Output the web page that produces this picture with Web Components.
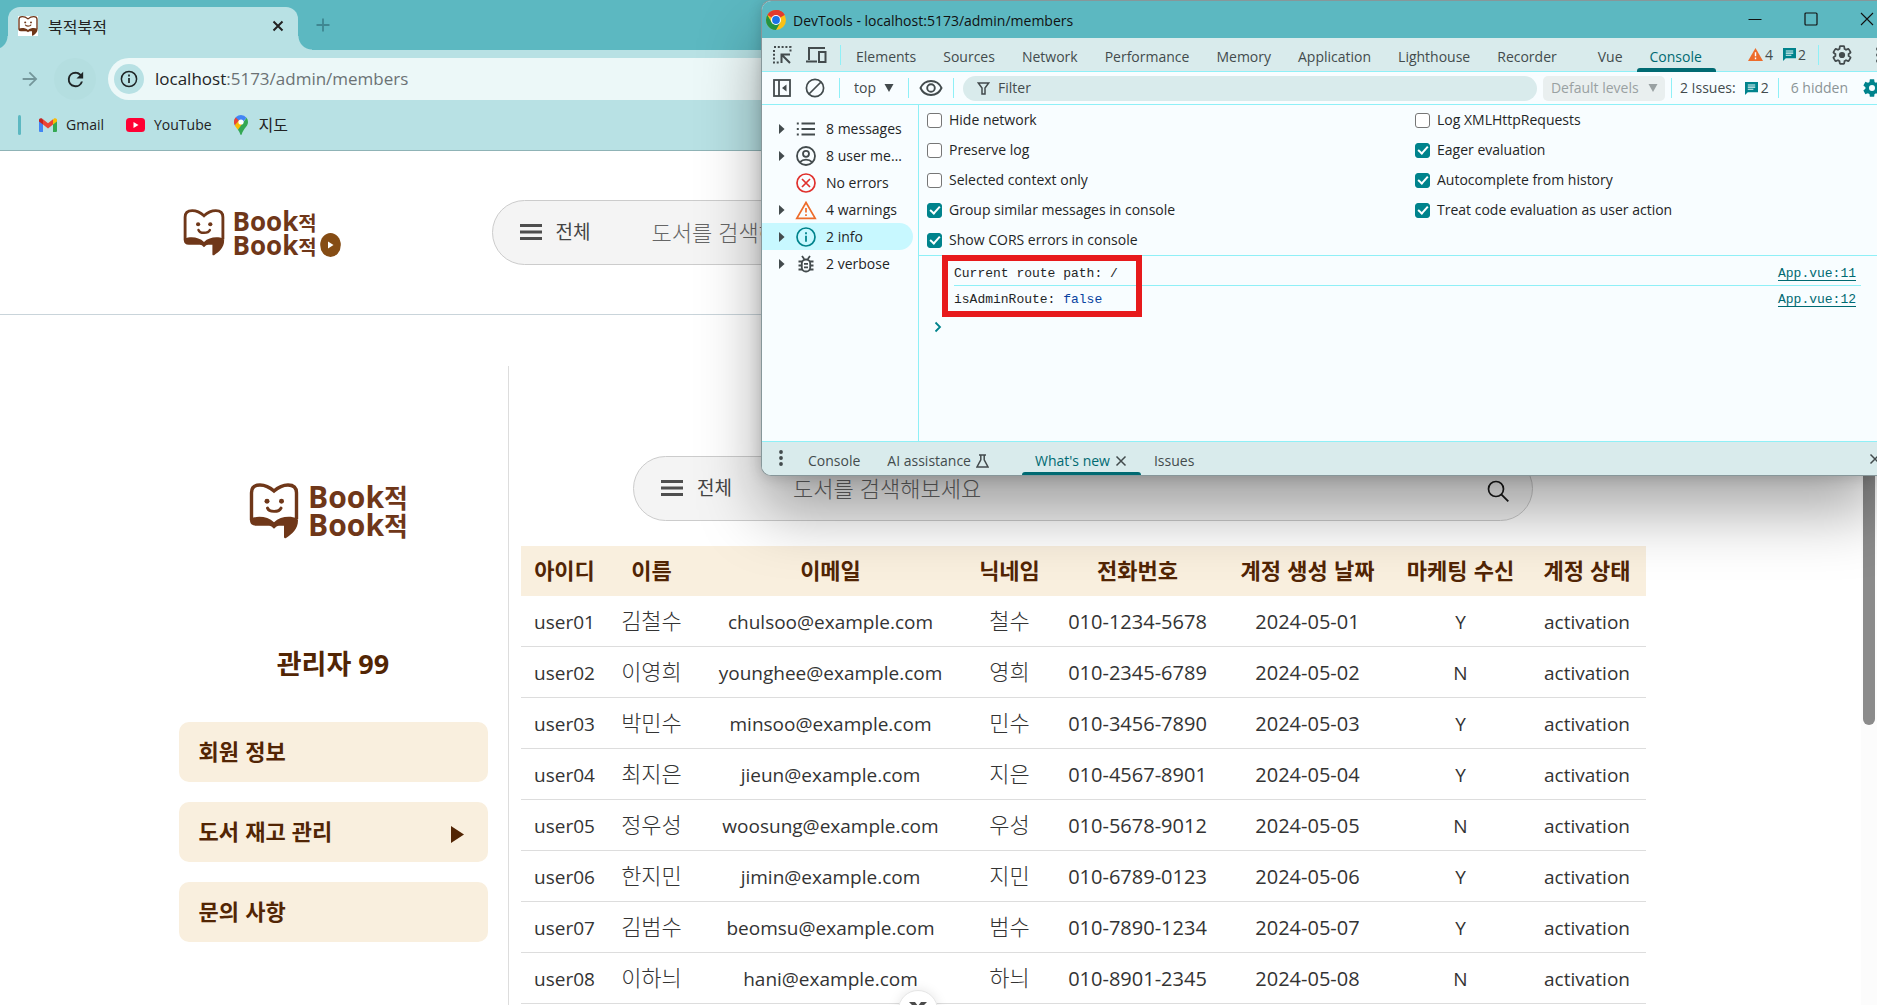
<!DOCTYPE html>
<html lang="ko">
<head>
<meta charset="utf-8">
<title>북적북적</title>
<style>
  html, body { height: 100%; }
  body {
    margin: 0; overflow: hidden; background: #fff; color: #333;
    font-family: "Open Sans", "Noto Sans CJK KR", sans-serif;
    --brand: #6f3719; --brand-dark: #522504; --cream: #f9efde;
    --teal: #5cb8c1; --teal-soft: #b8e1e4; --panel: #d9ebec; --line: #8ff0f7; --accent: #00838c; --accent-dark: #006a72;
  }
</style>
</head>
<body>
<app-desktop></app-desktop>

<script>
const define = (name, html, setup) => {
  const template = document.createElement('template');
  template.innerHTML = html;
  customElements.define(name, class extends HTMLElement {
    constructor() {
      super();
      this.attachShadow({ mode: 'open' }).append(template.content.cloneNode(true));
    }
    connectedCallback() { if (setup) setup(this, this.shadowRoot); }
  });
};

const GEAR = 'M19.14 12.94c.04-.3.06-.61.06-.94 0-.32-.02-.64-.07-.94l2.03-1.58c.18-.14.23-.41.12-.61l-1.92-3.32c-.12-.22-.37-.29-.59-.22l-2.39.96c-.5-.38-1.03-.7-1.62-.94l-.36-2.54c-.04-.24-.24-.41-.48-.41h-3.84c-.24 0-.43.17-.47.41l-.36 2.54c-.59.24-1.13.57-1.62.94l-2.39-.96c-.22-.08-.47 0-.59.22L2.74 8.87c-.12.21-.08.47.12.61l2.03 1.58c-.05.3-.09.63-.09.94s.02.64.07.94l-2.03 1.58c-.18.14-.23.41-.12.61l1.92 3.32c.12.22.37.29.59.22l2.39-.96c.5.38 1.03.7 1.62.94l.36 2.54c.05.24.24.41.48.41h3.84c.24 0 .44-.17.47-.41l.36-2.54c.59-.24 1.13-.56 1.62-.94l2.39.96c.22.08.47 0 .59-.22l1.92-3.32c.12-.22.07-.47-.12-.61z';
const BOOK = `<path d="M2.5 38V10C2.5 4 6 2 11 2c6 0 10 2.500 14 6.200C29 4.500 33 2 39 2c5 0 8.500 2 8.500 8v27" fill="#fff" stroke="#6f3719" stroke-width="3.400"/>
  <path d="M2 36c7-3 17-2 23 4 6-6 16-7 23-4l1 2c0 9-6 14-12 18-1.500.600-2 0-2-1.500V43.500h-5c-2 0-3 1-5 3-2-2-3-3-5-3H7c-4 0-6-2-6-5.500z" fill="#6f3719"/>
  <circle cx="18" cy="18.500" r="2.500" fill="#6f3719"/><circle cx="32.500" cy="18.500" r="2.500" fill="#6f3719"/>
  <path d="M18.500 25.500c1.500 4.500 11.500 4.500 13.500 0" fill="none" stroke="#6f3719" stroke-width="3" stroke-linecap="round"/>`;

/* name: [width, height, viewBox, markup] */
const ICONS = {
  book: [50, 56, '0 0 50 57', BOOK],
  favicon: [20, 20, '0 0 50 57', `<rect width="50" height="57" fill="#fff"/>${BOOK}`],
  close: [20, 20, '0 0 20 20', '<path d="M5.500 5.500l9 9m0-9l-9 9" stroke="#222" stroke-width="2" fill="none"/>'],
  plus: [20, 20, '0 0 20 20', '<path d="M10 3.500v13M3.500 10h13" stroke="#3f8791" stroke-width="1.800"/>'],
  forward: [22, 22, '0 0 24 24', '<path d="M12 4l-1.400 1.400 5.600 5.600H4v2h12.200l-5.600 5.600L12 20l8-8z" fill="#74969a"/>'],
  reload: [23, 23, '0 0 24 24', '<path d="M17.650 6.350A7.960 7.960 0 0 0 12 4a8 8 0 1 0 7.730 10h-2.080A6 6 0 1 1 12 6c1.660 0 3.140.690 4.220 1.780L13 11h7V4z" fill="#1f2526"/>'],
  info: [30, 30, '0 0 30 30', '<circle cx="15" cy="15" r="15" fill="#b8e1e4"/><circle cx="15" cy="15" r="7.600" fill="none" stroke="#1f2526" stroke-width="1.500"/><path d="M15 14v5M15 10.500v2" stroke="#1f2526" stroke-width="1.700"/>'],
  gmail: [18, 14, '0 0 18 14', '<path d="M0 1.500V13a1 1 0 0 0 1 1h3V6z" fill="#4285f4"/><path d="M18 1.500V13a1 1 0 0 1-1 1h-3V6z" fill="#34a853"/><path d="M14 1.500L15 .600C16.200-.400 18 .300 18 2v1.500L14 6.500z" fill="#fbbc04"/><path d="M4 6.500L0 3.500V2C0 .300 1.800-.400 3 .600L4 1.500z" fill="#c5221f"/><path d="M4 1.300l5 3.900 5-3.900v5.200l-5 3.900-5-3.900z" fill="#ea4335"/>'],
  youtube: [19, 14, '0 0 19 14', '<rect width="19" height="14" rx="3.500" fill="#ff0033"/><path d="M7.500 4v6l5-3z" fill="#fff"/>'],
  maps: [14, 20, '0 0 14 20', '<path d="M7 0a7 7 0 0 1 5.500 2.700L4.600 12 1.300 11A7 7 0 0 1 0 7a7 7 0 0 1 7-7z" fill="#4285f4"/><path d="M1.600 2.600L5 5.500 1 10.500A7 7 0 0 1 1.600 2.600z" fill="#ea4335"/><path d="M8.900 8.800l-5 6C2.800 13.200 1.500 11.800.800 10.200L5.300 5z" fill="#fbbc04"/><path d="M12.600 2.800c2 2.800 1.800 6-.300 8.700C10 14.500 8.500 16.500 7.800 19c-.200 1.200-1.400 1.200-1.600 0-.500-1.700-1.300-3-2.300-4.200z" fill="#34a853"/><circle cx="7" cy="7" r="2.600" fill="#fff"/>'],
  menu: [22, 16, '0 0 22 16', '<path d="M0 1.500h22M0 8h22M0 14.500h22" stroke="#4e4e4e" stroke-width="2.800"/>'],
  play: [21, 24, '0 0 21 24', '<ellipse cx="10.500" cy="12" rx="10.300" ry="12" fill="#854c14"/><path d="M8 8.500v7l5.500-3.500z" fill="#fff"/>'],
  search: [24, 24, '0 0 24 24', '<circle cx="10" cy="10" r="7.500" fill="none" stroke="#1a1a1a" stroke-width="1.700"/><path d="M15.300 15.300l7 7" stroke="#1a1a1a" stroke-width="1.900"/>'],
  triangle: [13, 17, '0 0 13 17', '<path d="M0 0v17l13-8.500z" fill="#522504"/>'],
  chrome: [20, 20, '0 0 20 20', '<circle cx="10" cy="10" r="10" fill="#fbc116"/><path d="M10 10L1.340 5A10 10 0 0 1 18.660 5z" fill="#e33b2e"/><path d="M10 0a10 10 0 0 1 8.660 5H10z" fill="#e33b2e"/><path d="M1.340 5A10 10 0 0 0 10 20l4.330-7.500L10 10 5.670 12.500z" fill="#229342"/><circle cx="10" cy="10" r="5" fill="#fff"/><circle cx="10" cy="10" r="3.900" fill="#1a73e8"/>'],
  winmin: [14, 14, '0 0 14 14', '<path d="M.500 7.500h13" stroke="#111"/>'],
  winmax: [14, 14, '0 0 14 14', '<rect x="1" y="1" width="12" height="12" rx="1" fill="none" stroke="#111" stroke-width="1.200"/>'],
  winclose: [14, 14, '0 0 14 14', '<path d="M1 1l12 12M13 1L1 13" stroke="#111" stroke-width="1.100"/>'],
  inspect: [20, 20, '0 0 20 20', '<path d="M2 2h16.500v5" fill="none" stroke="#434b4d" stroke-width="2" stroke-dasharray="2 1.800"/><path d="M2 5v12.500h6" fill="none" stroke="#434b4d" stroke-width="2" stroke-dasharray="2 1.800"/><path d="M9.500 18V9.500H18M10 10l8 8" fill="none" stroke="#434b4d" stroke-width="2"/>'],
  device: [22, 18, '0 0 22 18', '<path d="M4 14V2h16M1 15.500h11" fill="none" stroke="#434b4d" stroke-width="2"/><rect x="14" y="6" width="6.500" height="10" fill="none" stroke="#434b4d" stroke-width="2"/>'],
  panel: [18, 18, '0 0 18 18', '<rect x="1" y="1" width="16" height="16" fill="none" stroke="#434b4d" stroke-width="1.800"/><path d="M6 1v16" stroke="#434b4d" stroke-width="1.800"/><path d="M13.500 5.500v7L9 9z" fill="#434b4d"/>'],
  ban: [20, 20, '0 0 20 20', '<circle cx="10" cy="10" r="8.600" fill="none" stroke="#434b4d" stroke-width="1.700"/><path d="M4 16L16 4" stroke="#434b4d" stroke-width="1.700"/>'],
  caret: [10, 8, '0 0 10 8', '<path d="M.500 0h9L5 8z" fill="currentColor"/>'],
  eye: [24, 18, '0 0 24 18', '<path d="M1.500 9C3.500 4.500 7.300 2 12 2s8.500 2.500 10.500 7c-2 4.500-5.800 7-10.500 7S3.500 13.500 1.500 9z" fill="none" stroke="#434b4d" stroke-width="1.900"/><circle cx="12" cy="9" r="3.800" fill="none" stroke="#434b4d" stroke-width="1.900"/>'],
  funnel: [13, 13, '0 0 13 13', '<path d="M1.300 1h10.400L8 6v6H5V6z" fill="none" stroke="#434b4d" stroke-width="1.500"/>'],
  warn: [15, 13, '0 0 16 14', '<path d="M8 0l8 14H0z" fill="#ed6c2b"/><path d="M8 4.500v4.500M8 10.300v1.700" stroke="#fff" stroke-width="1.500"/>'],
  chat: [13, 13, '0 0 14 14', '<path d="M0 0h14v11H3l-3 3z" fill="#00838c"/><path d="M3 3.200h8M3 5.500h8M3 7.800h6" stroke="#e4f5f5" stroke-width="1.200"/>'],
  gear: [22, 22, '0 0 24 24', `<path d="${GEAR}" fill="none" stroke="#434b4d" stroke-width="1.900"/><circle cx="12" cy="12" r="3.400" fill="#434b4d"/>`],
  gearfill: [22, 22, '0 0 24 24', `<path d="${GEAR}" fill="#00838c"/><circle cx="12" cy="12" r="3.300" fill="#f8fdff"/>`],
  dots: [4, 16, '0 0 4 16', '<path d="M2 2v.010M2 8v.010M2 14v.010" stroke="#434b4d" stroke-width="3.800" stroke-linecap="round"/>'],
  right: [6, 10, '0 0 7 10', '<path d="M0 0l6.500 5L0 10z" fill="#434b4d"/>'],
  list: [20, 20, '0 0 20 20', '<path d="M5.500 4.500H19M5.500 10H19M5.500 15.500H19M.800 4.500h2M.800 10h2M.800 15.500h2" stroke="#434b4d" stroke-width="1.800"/>'],
  user: [20, 20, '0 0 20 20', '<g fill="none" stroke="#434b4d" stroke-width="1.800"><circle cx="10" cy="10" r="9"/><circle cx="10" cy="7.800" r="3"/><path d="M4 16.200c3-3.400 9-3.400 12 0"/></g>'],
  error: [20, 20, '0 0 20 20', '<g fill="none" stroke="#e0312d" stroke-width="1.700"><circle cx="10" cy="10" r="9"/><path d="M6 6l8 8M14 6l-8 8"/></g>'],
  warning: [22, 20, '0 0 22 20', '<path d="M11 2.500l9.200 15.800H1.800z" fill="none" stroke="#ed6c2b" stroke-width="1.700"/><path d="M11 8v4.500M11 14.200v1.900" stroke="#ed6c2b" stroke-width="1.700"/>'],
  infoline: [20, 20, '0 0 20 20', '<circle cx="10" cy="10" r="9" fill="none" stroke="#00838c" stroke-width="1.700"/><path d="M10 8.800v6M10 5.300v2" stroke="#00838c" stroke-width="1.800"/>'],
  bug: [20, 20, '0 0 20 20', '<g fill="none" stroke="#434b4d" stroke-width="1.800"><rect x="5.800" y="5.500" width="8.400" height="12" rx="4"/><path d="M6 2l2.200 3M14 2l-2.200 3M2.500 7.500h3.500M2.500 11.500h3.500M2.500 15.500h3.500M14 7.500h3.500M14 11.500h3.500M14 15.500h3.500M8 9.800h4M8 13.300h4"/></g>'],
  prompt: [8, 12, '0 0 8 12', '<path d="M1.500 1.500L6 6l-4.500 4.500" fill="none" stroke="#00838c" stroke-width="1.800"/>'],
  flask: [13, 14, '0 0 13 14', '<path d="M3 .900h7M4.800 1v4.800L1 12.900h11L8.200 5.800V1" fill="none" stroke="#434b4d" stroke-width="1.500"/>'],
  x: [12, 12, '0 0 12 12', '<path d="M1.500 1.500l9 9m0-9l-9 9" stroke="#434b4d" stroke-width="1.500"/>'],
  wings: [18, 14, '0 0 18 14', '<path d="M0 0h6l3 4 3-4h6l-3 3 1 4-4-2-3 4-3-4-4 2 1-4z" fill="#4b4b4b"/>']
};

customElements.define('ui-icon', class extends HTMLElement {
  connectedCallback() {
    const [w, h, box, body] = ICONS[this.getAttribute('name')];
    const width = this.getAttribute('width') || w;
    const height = Math.round(h * width / w);
    if (!this.shadowRoot) this.attachShadow({ mode: 'open' });
    this.shadowRoot.innerHTML = `<style>:host{display:inline-flex;flex:none}svg{display:block}</style>
      <svg width="${width}" height="${height}" viewBox="${box}" preserveAspectRatio="none" aria-hidden="true">${body}</svg>`;
  }
});

/* ---------- browser chrome ---------- */
define('browser-tabs', `
<style>
  :host { display: flex; height: 50px; padding-left: 8px; align-items: flex-end; gap: 9px; background: var(--teal); }
  .tab { display: flex; align-items: center; box-sizing: border-box; width: 290px; height: 43px; padding: 0 10px 6px 10px;
    background: var(--teal-soft); border-radius: 12px 12px 0 0; position: relative; font-size: 16px; line-height: 24px; color: #222; }
  .tab::before, .tab::after { content: ""; position: absolute; bottom: 0; width: 14px; height: 14px; }
  .tab::before { left: -14px; background: radial-gradient(circle at 0 0, transparent 13px, var(--teal-soft) 14px); }
  .tab::after { right: -14px; background: radial-gradient(circle at 100% 0, transparent 13px, var(--teal-soft) 14px); }
  .title { flex: 1; margin-left: 10px; padding-top: 2px; }
  button { border: 0; background: none; padding: 0; display: flex; }
  .new { height: 50px; align-items: center; margin-left: 6px; }
</style>
<div class="tab"><ui-icon name="favicon"></ui-icon><span class="title">북적북적</span>
  <button aria-label="close tab"><ui-icon name="close"></ui-icon></button></div>
<button class="new" aria-label="new tab"><ui-icon name="plus"></ui-icon></button>`);

define('browser-toolbar', `
<style>
  :host { display: flex; align-items: center; height: 58px; padding-left: 19px; background: var(--teal-soft); }
  button { border: 0; padding: 0; display: flex; align-items: center; justify-content: center; background: none; }
  .reload { width: 42px; height: 42px; border-radius: 50%; background: #b4dee0; margin: 0 12px 0 13px; }
  .address { flex: 1; display: flex; align-items: center; gap: 11px; height: 42px; padding-left: 6px; border-radius: 21px 0 0 21px; background: #ecf8f8;
    font-size: 17px; line-height: 24px; color: #6b7274; }
  b { font-weight: 400; color: #1f2526; }
</style>
<button aria-label="forward"><ui-icon name="forward"></ui-icon></button>
<button class="reload" aria-label="reload"><ui-icon name="reload"></ui-icon></button>
<div class="address"><ui-icon name="info"></ui-icon><span><b>localhost</b>:5173/admin/members</span></div>`);

define('bookmarks-bar', `
<style>
  :host { display: flex; align-items: center; box-sizing: border-box; height: 43px; padding: 0 0 8px 18px; background: var(--teal-soft); border-bottom: 1px solid #8fb3b6; }
  .split { width: 3px; height: 20px; border-radius: 2px; background: var(--teal); margin-right: 18px; }
  a { display: flex; align-items: center; gap: 9px; margin-right: 22px; color: #222; text-decoration: none; font-size: 14px; line-height: 22px; }
  a.map { gap: 11px; font-size: 16px; }
</style>
<span class="split"></span>
<a href="#"><ui-icon name="gmail"></ui-icon>Gmail</a>
<a href="#"><ui-icon name="youtube"></ui-icon>YouTube</a>
<a href="#" class="map"><ui-icon name="maps"></ui-icon>지도</a>`);

/* ---------- site ---------- */
define('brand-logo', `
<style>
  :host { display: inline-flex; align-items: center; gap: 9px; color: var(--brand); --size: 30px; --pitch: 28px; }
  :host([small]) { gap: 8px; --size: 26px; --pitch: 24px; }
  .name { font: 700 var(--size)/var(--pitch) "Open Sans", "Noto Sans CJK KR", sans-serif; white-space: nowrap; }
  .name div { height: var(--pitch); }
  small { font-size: 26px; }
  :host([small]) small { font-size: 20px; }
</style>
<ui-icon name="book"></ui-icon>
<div class="name"><div>Book<small>적</small></div><div>Book<small>적</small></div></div>
<slot></slot>`, (host, root) => {
  if (host.hasAttribute('small')) {
    const icon = root.querySelector('ui-icon');
    icon.setAttribute('width', 42);
    icon.connectedCallback();
  }
});

define('search-bar', `
<style>
  :host { display: block; width: 900px; }
  form { display: flex; align-items: center; box-sizing: border-box; height: 65px; padding: 0 22px 2px 27px; margin: 0; border: 1px solid #ccc; border-radius: 33px; background: #f4f4f4; }
  button { border: 0; background: none; padding: 0; display: flex; align-items: center; gap: 14px; font: 400 19px/28px "Noto Sans CJK KR", sans-serif; color: #444; }
  button span { padding-bottom: 2px; }
  input { flex: 1; min-width: 0; margin: 0 0 0 61px; padding: 0 0 2px; border: 0; outline: 0; background: none; font: 300 22px/32px "Noto Sans CJK KR", sans-serif; color: #333; }
  input::placeholder { color: #666; opacity: 1; }
  .go { padding-top: 6px; }
</style>
<form>
  <button type="button"><ui-icon name="menu"></ui-icon><span>전체</span></button>
  <input type="text" placeholder="도서를 검색해보세요" aria-label="도서 검색">
  <button type="button" class="go" aria-label="search"><ui-icon name="search"></ui-icon></button>
</form>`);

define('site-header', `
<style>
  :host { display: block; border-bottom: 1px solid #c9d4da; }
  .inner { display: flex; align-items: center; box-sizing: border-box; max-width: 1504px; height: 163px; margin: 0 auto; padding: 0 4px; gap: 151px; }
  brand-logo { width: 158px; }
  .badge { align-self: flex-end; margin-left: -5px; }
</style>
<div class="inner">
  <brand-logo small><ui-icon class="badge" name="play"></ui-icon></brand-logo>
  <search-bar></search-bar>
</div>`);

define('side-item', `
<style>
  :host { display: block; }
  button { display: flex; align-items: center; justify-content: space-between; box-sizing: border-box; width: 100%; height: 60px; padding: 0 24px 0 20px;
    border: 0; border-radius: 10px; background: var(--cream); color: var(--brand-dark); font: 700 22px/32px "Noto Sans CJK KR", sans-serif; }
  .text { padding-bottom: 4px; }
  .mark { display: flex; padding-top: 4px; }
</style>
<button><span class="text"><slot></slot></span><span class="mark"><slot name="mark"></slot></span></button>`);

define('admin-sidebar', `
<style>
  :host { display: flex; flex-direction: column; width: 309px; padding-right: 20px; border-right: 1px solid #ddd; }
  brand-logo { align-self: center; margin: 117px 9px 105px 0; }
  h2 { margin: 0 0 38px; text-align: center; font: 700 27px/40px "Open Sans", "Noto Sans CJK KR", sans-serif; color: var(--brand-dark); }
  nav { display: flex; flex-direction: column; gap: 20px; }
</style>
<brand-logo></brand-logo>
<h2>관리자 99</h2>
<nav>
  <side-item>회원 정보</side-item>
  <side-item>도서 재고 관리<ui-icon slot="mark" name="triangle"></ui-icon></side-item>
  <side-item>문의 사항</side-item>
</nav>`);

const MEMBERS = [
  ['user01', '김철수', 'chulsoo@example.com', '철수', '010-1234-5678', '2024-05-01', 'Y'],
  ['user02', '이영희', 'younghee@example.com', '영희', '010-2345-6789', '2024-05-02', 'N'],
  ['user03', '박민수', 'minsoo@example.com', '민수', '010-3456-7890', '2024-05-03', 'Y'],
  ['user04', '최지은', 'jieun@example.com', '지은', '010-4567-8901', '2024-05-04', 'Y'],
  ['user05', '정우성', 'woosung@example.com', '우성', '010-5678-9012', '2024-05-05', 'N'],
  ['user06', '한지민', 'jimin@example.com', '지민', '010-6789-0123', '2024-05-06', 'Y'],
  ['user07', '김범수', 'beomsu@example.com', '범수', '010-7890-1234', '2024-05-07', 'Y'],
  ['user08', '이하늬', 'hani@example.com', '하늬', '010-8901-2345', '2024-05-08', 'N']
];

define('members-table', `
<style>
  :host { display: block; }
  table { width: 100%; table-layout: fixed; border-collapse: separate; border-spacing: 0; }
  th, td { box-sizing: border-box; padding: 0 0 0 2px; text-align: center; white-space: nowrap; }
  th { height: 50px; padding-bottom: 4px; background: var(--cream); color: var(--brand-dark); font: 700 22px/32px "Noto Sans CJK KR", sans-serif; }
  td { height: 51px; padding-top: 2px; border-bottom: 1px solid #ddd; font-size: 19px; line-height: 32px; }
  td:nth-child(2), td:nth-child(4) { padding: 0 0 4px 2px; font-family: "Noto Sans CJK KR", sans-serif; font-size: 22px; font-weight: 300; }
  td:nth-child(5), td:nth-child(6) { font-size: 20px; }
</style>
<table>
  <colgroup><col style="width:86px"><col style="width:88px"><col style="width:270px"><col style="width:88px"><col style="width:168px"><col style="width:172px"><col style="width:134px"><col style="width:119px"></colgroup>
  <thead><tr><th>아이디</th><th>이름</th><th>이메일</th><th>닉네임</th><th>전화번호</th><th>계정 생성 날짜</th><th>마케팅 수신</th><th>계정 상태</th></tr></thead>
  <tbody></tbody>
</table>`, (host, root) => {
  root.querySelector('tbody').innerHTML = MEMBERS
    .map(row => `<tr>${[...row, 'activation'].map(cell => `<td>${cell}</td>`).join('')}</tr>`).join('');
});

define('admin-page', `
<style>
  :host { display: flex; max-width: 1504px; margin: 51px auto 0; height: 900px; }
  main { flex: 1; min-width: 0; padding: 90px 37px 0 12px; }
  search-bar { margin: 0 auto 25px; }
</style>
<admin-sidebar></admin-sidebar>
<main><search-bar></search-bar><members-table></members-table></main>`);

define('page-scrollbar', `
<style>
  :host { display: block; width: 16px; background: #fcfcfc; }
  div { width: 12px; height: 574px; margin: 0 auto; border-radius: 6px; background: #8b8b8b; }
</style><div></div>`);

/* ---------- devtools ---------- */
define('dev-tab', `
<style>
  :host { display: flex; align-items: stretch; }
  button { position: relative; display: flex; align-items: center; gap: 5px; border: 0; background: none; padding: 4px 14px 0 13px; font: 400 14px/20px "Open Sans", sans-serif; color: #434b4d; white-space: nowrap; }
  :host([active]) button { color: var(--accent-dark); }
  :host([active]) button::after { content: ""; position: absolute; left: 0; right: 0; bottom: -1px; height: 4px; border-radius: 3px 3px 0 0; background: var(--accent-dark); }
</style>
<button><slot></slot></button>`);

define('dev-check', `
<style>
  :host { display: flex; }
  label { display: flex; align-items: center; gap: 7px; height: 30px; font-size: 14px; line-height: 20px; color: #1f2526; white-space: nowrap; }
  input { appearance: none; box-sizing: border-box; width: 15px; height: 15px; margin: 0; border: 1px solid #767676; border-radius: 3px; background: #fff; display: grid; place-items: center; }
  input:checked { background: var(--accent); border-color: var(--accent); }
  input:checked::after { content: ""; width: 4px; height: 8px; margin-bottom: 2px; border: solid #fff; border-width: 0 2px 2px 0; transform: rotate(42deg); }
</style>
<label><input type="checkbox"><slot></slot></label>`, (host, root) => {
  root.querySelector('input').checked = host.hasAttribute('checked');
});

define('dev-filter', `
<style>
  :host { display: block; }
  button { display: flex; align-items: center; box-sizing: border-box; width: 151px; height: 27px; padding: 0 8px 0 17px; border: 0; border-radius: 0 14px 14px 0; background: none; text-align: left;
    font: 400 14px/20px "Open Sans", sans-serif; color: #1f2526; }
  :host([active]) button { background: #c8f8ff; }
  .mark { width: 16px; display: flex; }
  .icon { width: 22px; margin-right: 9px; display: flex; justify-content: center; }
  .text { flex: 1; min-width: 0; overflow: hidden; text-overflow: ellipsis; white-space: nowrap; }
</style>
<button><span class="mark"></span><span class="icon"></span><span class="text"><slot></slot></span></button>`, (host, root) => {
  root.querySelector('.icon').innerHTML = `<ui-icon name="${host.getAttribute('icon')}"></ui-icon>`;
  if (!host.hasAttribute('leaf')) root.querySelector('.mark').innerHTML = '<ui-icon name="right"></ui-icon>';
});

define('dev-select', `
<style>
  :host { display: flex; align-items: center; gap: 8px; height: 25px; color: #434b4d; }
  :host([disabled]) { padding: 0 7px 0 8px; border-radius: 5px; background: #e9efef; color: #99a1a2; box-sizing: border-box; width: 122px; justify-content: space-between; }
  select { appearance: none; border: 0; padding: 0; margin: 0; background: none; color: inherit; font: 400 14px/20px "Open Sans", sans-serif; opacity: 1; field-sizing: content; }
</style>
<select></select><ui-icon name="caret"></ui-icon>`, (host, root) => {
  const select = root.querySelector('select');
  select.innerHTML = `<option>${host.getAttribute('value')}</option>`;
  select.disabled = host.hasAttribute('disabled');
  select.setAttribute('aria-label', host.getAttribute('label'));
});

define('log-row', `
<style>
  :host { display: flex; justify-content: space-between; align-items: center; box-sizing: border-box; height: 27px; margin: 0 16px 0 35px; padding-right: 5px; font: 400 13px/20px "Liberation Mono", monospace; color: #1f2526; }
  :host([first]) { height: 30px; padding-top: 6px; border-bottom: 1px solid var(--line); }
  a { color: var(--accent-dark); text-underline-offset: 3px; }
</style>
<span><slot></slot></span><a href="#"></a>`, (host, root) => {
  root.querySelector('a').textContent = host.getAttribute('source');
});

define('devtools-window', `
<style>
  :host { display: flex; flex-direction: column; box-sizing: border-box; border: 1px solid #87979a; border-right: 0; border-radius: 10px 0 0 10px; overflow: hidden; background: #f8fdff; font-size: 14px; line-height: 20px; color: #434b4d;
    box-shadow: 0 36px 62px rgba(0,0,0,.34), 0 2px 14px rgba(0,0,0,.16); }
  button { border: 0; background: none; padding: 0; display: flex; align-items: center; }
  .title { display: flex; align-items: center; height: 37px; padding-left: 4px; background: var(--teal); color: #111; }
  .title span { flex: 1; margin-left: 7px; padding-top: 2px; }
  .title .controls { display: flex; gap: 42px; padding: 0 3px 2px 0; }
  .tabs { display: flex; align-items: stretch; height: 33px; background: var(--panel); border-bottom: 1px solid var(--line); }
  .tools { display: flex; align-items: center; }
  .push { margin-left: auto; }
  .split { width: 1px; height: 20px; background: var(--line); align-self: center; flex: none; }
  .bar { display: flex; align-items: center; height: 32px; border-bottom: 1px solid var(--line); }
  .filter { flex: 1; display: flex; align-items: center; gap: 8px; height: 25px; padding-left: 14px; margin: 0 6px 0 9px; border-radius: 13px; background: var(--panel); }
  .filter input { flex: 1; min-width: 0; border: 0; padding: 0; background: none; outline: 0; font: 400 14px/20px "Open Sans", sans-serif; }
  .filter input::placeholder { color: #434b4d; opacity: 1; }
  .body { display: flex; height: 336px; border-bottom: 1px solid var(--line); }
  aside { box-sizing: border-box; width: 157px; padding-top: 10px; border-right: 1px solid var(--line); }
  .console { flex: 1; min-width: 0; }
  .settings { display: grid; grid-template-columns: 488px 1fr; padding-left: 8px; border-bottom: 1px solid var(--line); }
  .logs { position: relative; }
  .mark { position: absolute; left: 23px; top: -1px; width: 188px; height: 50px; border: 6px solid #e71a1c; }
  .false { color: #0842a0; }
  .prompt { display: flex; padding: 8px 0 0 15px; }
  .drawer { display: flex; height: 33px; background: var(--panel); overflow: hidden; }
</style>
<div class="title"><ui-icon name="chrome"></ui-icon><span>DevTools - localhost:5173/admin/members</span>
  <div class="controls"><button aria-label="minimize"><ui-icon name="winmin"></ui-icon></button><button aria-label="maximize"><ui-icon name="winmax"></ui-icon></button><button aria-label="close"><ui-icon name="winclose"></ui-icon></button></div></div>
<div class="tabs">
  <div class="tools" style="gap:13px;padding:0 2px 0 10px"><button aria-label="inspect"><ui-icon name="inspect"></ui-icon></button><button aria-label="device"><ui-icon name="device"></ui-icon></button><span class="split"></span></div>
  <dev-tab>Elements</dev-tab><dev-tab>Sources</dev-tab><dev-tab>Network</dev-tab><dev-tab>Performance</dev-tab><dev-tab>Memory</dev-tab><dev-tab>Application</dev-tab><dev-tab>Lighthouse</dev-tab><dev-tab>Recorder</dev-tab>
  <dev-tab style="margin-left:14px">Vue</dev-tab><dev-tab active>Console</dev-tab>
  <div class="tools push" style="gap:2px"><ui-icon name="warn"></ui-icon>4<ui-icon name="chat" style="margin-left:8px"></ui-icon>2
    <span class="split" style="margin:0 10px 0 10px"></span><button aria-label="settings"><ui-icon name="gear"></ui-icon></button><button aria-label="more" style="margin:0 -3px 0 21px"><ui-icon name="dots"></ui-icon></button></div>
</div>
<div class="bar">
  <div class="tools" style="gap:14px;padding-left:11px"><button aria-label="sidebar"><ui-icon name="panel"></ui-icon></button><button aria-label="clear"><ui-icon name="ban"></ui-icon></button><span class="split"></span>
    <dev-select value="top" label="context"></dev-select><span class="split"></span></div>
  <button aria-label="live expression" style="margin:0 10px"><ui-icon name="eye"></ui-icon></button><span class="split"></span>
  <div class="filter"><ui-icon name="funnel"></ui-icon><input type="text" placeholder="Filter" aria-label="Filter"></div>
  <dev-select disabled value="Default levels" label="levels"></dev-select>
  <div class="tools"><span class="split" style="margin:0 8px 0 6px"></span>2 Issues:<ui-icon name="chat" style="margin:0 3px 0 9px"></ui-icon>2<span class="split" style="margin:0 12px 0 9px"></span><span style="color:#8b9496">6 hidden</span>
    <button aria-label="console settings" style="margin:0 -6px 0 13px"><ui-icon name="gearfill"></ui-icon></button></div>
</div>
<div class="body">
  <aside>
    <dev-filter icon="list">8 messages</dev-filter>
    <dev-filter icon="user">8 user messages</dev-filter>
    <dev-filter icon="error" leaf>No errors</dev-filter>
    <dev-filter icon="warning">4 warnings</dev-filter>
    <dev-filter icon="infoline" active>2 info</dev-filter>
    <dev-filter icon="bug">2 verbose</dev-filter>
  </aside>
  <div class="console">
    <div class="settings">
      <dev-check>Hide network</dev-check><dev-check>Log XMLHttpRequests</dev-check>
      <dev-check>Preserve log</dev-check><dev-check checked>Eager evaluation</dev-check>
      <dev-check>Selected context only</dev-check><dev-check checked>Autocomplete from history</dev-check>
      <dev-check checked>Group similar messages in console</dev-check><dev-check checked>Treat code evaluation as user action</dev-check>
      <dev-check checked>Show CORS errors in console</dev-check>
    </div>
    <div class="logs">
      <log-row first source="App.vue:11">Current route path: /</log-row>
      <log-row source="App.vue:12">isAdminRoute: <span class="false">false</span></log-row>
      <div class="mark"></div>
    </div>
    <div class="prompt"><ui-icon name="prompt"></ui-icon></div>
  </div>
</div>
<div class="drawer">
  <div class="tools" style="padding:0 12px 2px 17px"><button aria-label="more"><ui-icon name="dots"></ui-icon></button></div>
  <dev-tab>Console</dev-tab><dev-tab>AI assistance<ui-icon name="flask"></ui-icon></dev-tab>
  <dev-tab active style="margin-left:19px">What's new<ui-icon name="x"></ui-icon></dev-tab><dev-tab>Issues</dev-tab>
  <div class="tools push"><button aria-label="close drawer" style="margin-right:-4px"><ui-icon name="x"></ui-icon></button></div>
</div>`);

/* ---------- desktop ---------- */
define('app-desktop', `
<style>
  :host { display: flex; flex-direction: column; height: 100vh; position: relative; overflow: hidden; }
  .view { flex: 1; min-height: 0; display: flex; }
  .page { flex: 1; min-width: 0; overflow: hidden; }
  devtools-window { position: absolute; left: 761px; right: 0; top: 0; }
  .float { position: absolute; left: 898px; bottom: -25px; display: flex; justify-content: center; box-sizing: border-box; width: 40px; height: 40px; padding: 11px 0 0; border: 1px solid #e6e6e6; border-radius: 50%; background: #fff; box-shadow: 0 0 12px rgba(0,0,0,.1); }
</style>
<browser-tabs></browser-tabs>
<browser-toolbar></browser-toolbar>
<bookmarks-bar></bookmarks-bar>
<div class="view">
  <div class="page"><site-header></site-header><admin-page></admin-page></div>
  <page-scrollbar></page-scrollbar>
</div>
<button class="float" aria-label="panel"><ui-icon name="wings"></ui-icon></button>
<devtools-window></devtools-window>`);
</script>
</body>
</html>
